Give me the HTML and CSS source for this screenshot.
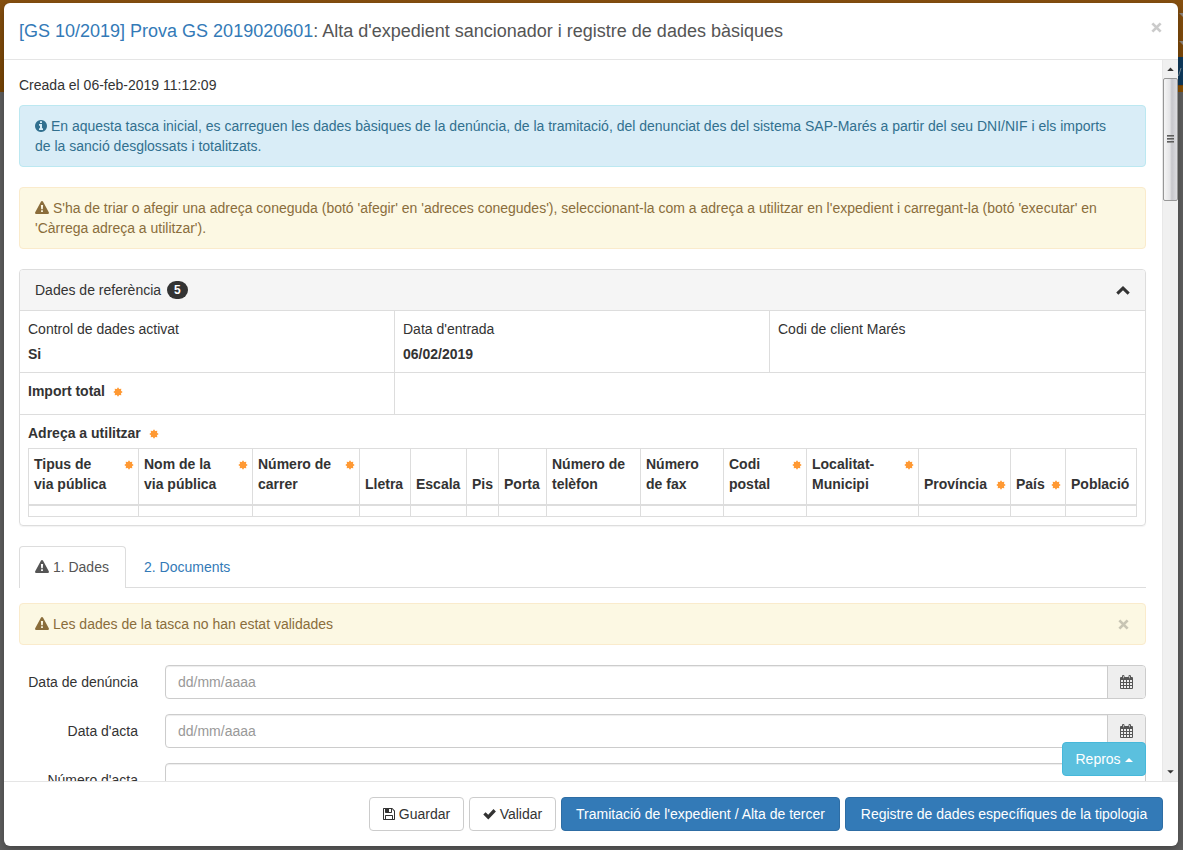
FILE: index.html
```html
<!DOCTYPE html>
<html lang="ca">
<head>
<meta charset="utf-8">
<title>Alta d'expedient sancionador</title>
<link rel="stylesheet" href="styles.css">
</head>
<body>
<svg class="sprite" aria-hidden="true">
  <symbol id="i-info" viewBox="128 128 1536 1536"><path d="M1152 1376v-160q0-14-9-23t-23-9h-96v-512q0-14-9-23t-23-9h-320q-14 0-23 9t-9 23v160q0 14 9 23t23 9h96v320h-96q-14 0-23 9t-9 23v160q0 14 9 23t23 9h448q14 0 23-9t9-23zm-128-896v-160q0-14-9-23t-23-9h-192q-14 0-23 9t-9 23v160q0 14 9 23t23 9h192q14 0 23-9t9-23zm640 416q0 209-103 385.5t-279.5 279.5-385.5 103-385.5-103-279.5-279.5-103-385.5 103-385.5 279.5-279.5 385.5-103 385.5 103 279.5 279.5 103 385.5z"/></symbol>
  <symbol id="i-warn" viewBox="0 0 14 13"><path fill-rule="evenodd" d="M7 0Q7.700 0 8.100 .7L13.800 11.300Q14.300 12.800 12.900 13H1.100Q-.3 12.800 .2 11.300L5.900 .7Q6.300 0 7 0ZM5.900 4 6.200 8.300H7.800L8.100 4ZM6.100 9.300V11.100H7.900V9.300Z"/></symbol>
  <symbol id="i-save" viewBox="0 0 12 12"><path fill-rule="evenodd" d="M.7 0H9.200L12 2.800V11.300Q12 12 11.300 12H.7Q0 12 0 11.300V.7Q0 0 .7 0ZM1 1V11H2V7.700Q2 7 2.700 7H9.300Q10 7 10 7.700V11H11V3.200L9 1V4.300Q9 5 8.300 5H2.700Q2 5 2 4.300V1ZM3 8V11H9V8ZM6 1V4H8V1Z"/></symbol>
  <symbol id="i-check" viewBox="0 0 13 12"><path d="M0.300 6.600 2.600 4.300 5.200 6.800 10.500 1 12.900 3.400 5.300 11.400z"/></symbol>
  <symbol id="i-close" viewBox="0 0 12 12"><path fill="none" stroke="currentColor" stroke-width="3" d="M1.500 1.500 10.500 10.500M10.500 1.500 1.500 10.500"/></symbol>
  <symbol id="i-calendar" viewBox="0 0 13 14"><path fill-rule="evenodd" d="M0 3Q0 2 1 2H2V1Q2 0 3.200 0T4.500 1V2H8.500V1Q8.500 0 9.700 0T11 1V2H12Q13 2 13 3V13Q13 14 12 14H1Q0 14 0 13ZM1 5V7H3V5ZM4 5V7H6V5ZM7 5V7H9V5ZM10 5V7H12V5ZM1 8V10H3V8ZM4 8V10H6V8ZM7 8V10H9V8ZM10 8V10H12V8ZM1 11V13H3V11ZM4 11V13H6V11ZM7 11V13H9V11ZM10 11V13H12V11ZM3 1V3.300H3.600V1ZM9.400 1V3.300H10V1Z"/></symbol>
  <symbol id="i-chevron" viewBox="0 0 14 10"><path fill="none" stroke="currentColor" stroke-width="3" d="M1.300 8.600 7 3.100 12.700 8.600"/></symbol>
  <symbol id="i-star" viewBox="0 0 10 10"><path d="M5 .3 6.200 2 8.300 1.700 8 3.800 9.700 5 8 6.200 8.300 8.300 6.200 8 5 9.700 3.800 8 1.700 8.300 2 6.200 .3 5 2 3.800 1.700 1.700 3.800 2Z"/></symbol>
</svg>

<div class="backdrop" aria-hidden="true">
  <div class="backdrop-nav">
    <svg class="backdrop-edge" viewBox="0 0 5 92">
      <path fill="#8f8780" d="M1 13H5V17ZM1 41H5V45Z"/>
      <path fill="#0e3a5d" d="M0 57H5V85H0Z"/>
      <path fill="none" stroke="#7f8f9c" d="M.5 76 3 68"/>
      <path fill="#8a5000" d="M0 86H5V92H0Z"/>
    </svg>
  </div>
</div>

<div class="modal" role="dialog" aria-labelledby="title">
  <header class="modal-header">
    <h1 class="modal-title" id="title"><a href="#">[GS 10/2019] Prova GS 2019020601</a>: Alta d'expedient sancionador i registre de dades bàsiques</h1>
    <button type="button" class="close" aria-label="Tanca"><svg class="icon-close"><use href="#i-close"/></svg></button>
  </header>

  <div class="modal-main">
    <div class="modal-body">
      <p class="created">Creada el 06-feb-2019 11:12:09</p>

      <div class="alert alert-info"><svg class="icon"><use href="#i-info"/></svg> En aquesta tasca inicial, es carreguen les dades bàsiques de la denúncia, de la tramitació, del denunciat des del sistema SAP-Marés a partir del seu DNI/NIF i els imports<br>de la sanció desglossats i totalitzats.</div>

      <div class="alert alert-warning"><svg class="icon icon-warn"><use href="#i-warn"/></svg> S'ha de triar o afegir una adreça coneguda (botó 'afegir' en 'adreces conegudes'), seleccionant-la com a adreça a utilitzar en l'expedient i carregant-la (botó 'executar' en 'Càrrega adreça a utilitzar').</div>

      <section class="panel">
        <div class="panel-heading">
          <h2 class="panel-title">Dades de referència <span class="badge">5</span></h2>
          <button type="button" class="toggle" aria-label="Plega"><svg class="icon-chevron"><use href="#i-chevron"/></svg></button>
        </div>
        <div class="facts">
          <div class="fact"><span>Control de dades activat</span><strong>Si</strong></div>
          <div class="fact"><span>Data d'entrada</span><strong>06/02/2019</strong></div>
          <div class="fact"><span>Codi de client Marés</span></div>
          <div class="fact fact-short"><strong class="required">Import total <svg class="star"><use href="#i-star"/></svg></strong></div>
          <div class="fact fact-rest"></div>
          <div class="fact fact-full">
            <strong class="required" id="address">Adreça a utilitzar <svg class="star"><use href="#i-star"/></svg></strong>
            <table class="address" aria-labelledby="address">
              <colgroup><col class="c-type"><col class="c-name"><col class="c-number"><col class="c-letter"><col class="c-stair"><col class="c-floor"><col class="c-door"><col class="c-phone"><col class="c-fax"><col class="c-fax"><col class="c-town"><col class="c-province"><col class="c-country"><col class="c-place"></colgroup>
              <thead>
                <tr>
                  <th><div class="th">Tipus de<br>via pública<svg class="star"><use href="#i-star"/></svg></div></th>
                  <th><div class="th">Nom de la<br>via pública<svg class="star"><use href="#i-star"/></svg></div></th>
                  <th><div class="th">Número de<br>carrer<svg class="star"><use href="#i-star"/></svg></div></th>
                  <th><div class="th">Lletra</div></th>
                  <th><div class="th">Escala</div></th>
                  <th><div class="th">Pis</div></th>
                  <th><div class="th">Porta</div></th>
                  <th><div class="th">Número de<br>telèfon</div></th>
                  <th><div class="th">Número<br>de fax</div></th>
                  <th><div class="th">Codi<br>postal<svg class="star"><use href="#i-star"/></svg></div></th>
                  <th><div class="th">Localitat-<br>Municipi<svg class="star"><use href="#i-star"/></svg></div></th>
                  <th><div class="th">Província<svg class="star"><use href="#i-star"/></svg></div></th>
                  <th><div class="th">País<svg class="star"><use href="#i-star"/></svg></div></th>
                  <th><div class="th">Població</div></th>
                </tr>
              </thead>
              <tbody><tr><td></td><td></td><td></td><td></td><td></td><td></td><td></td><td></td><td></td><td></td><td></td><td></td><td></td><td></td></tr></tbody>
            </table>
          </div>
        </div>
      </section>

      <nav class="tabs">
        <a class="tab tab-active" href="#"><svg class="icon icon-warn"><use href="#i-warn"/></svg> 1. Dades</a>
        <a class="tab" href="#">2. Documents</a>
      </nav>

      <div class="alert alert-warning alert-dismiss"><span><svg class="icon icon-warn"><use href="#i-warn"/></svg> Les dades de la tasca no han estat validades</span><button type="button" class="close" aria-label="Tanca"><svg class="icon-close"><use href="#i-close"/></svg></button></div>

      <form class="form">
        <div class="field">
          <label for="denuncia">Data de denúncia</label>
          <div class="input-group"><input id="denuncia" type="text" placeholder="dd/mm/aaaa"><button type="button" class="addon" aria-label="Calendari"><svg class="icon-calendar"><use href="#i-calendar"/></svg></button></div>
        </div>
        <div class="field">
          <label for="acta">Data d'acta</label>
          <div class="input-group"><input id="acta" type="text" placeholder="dd/mm/aaaa"><button type="button" class="addon" aria-label="Calendari"><svg class="icon-calendar"><use href="#i-calendar"/></svg></button></div>
        </div>
        <div class="field">
          <label for="numero">Número d'acta</label>
          <div class="input-group"><input id="numero" type="text"></div>
        </div>
      </form>
    </div>

    <div class="scrollbar" aria-hidden="true">
      <svg class="arrow" viewBox="0 0 16 18"><path d="M4.500 11 8 7.500 11.500 11z"/></svg>
      <div class="thumb"><i></i><i></i><i></i></div>
      <svg class="arrow arrow-down" viewBox="0 0 16 18"><path d="M4.500 7 8 10.500 11.500 7z"/></svg>
    </div>
    <button type="button" class="btn btn-info repros">Repros <span class="caret"></span></button>
  </div>

  <footer class="modal-footer">
    <button type="button" class="btn btn-save"><svg class="icon"><use href="#i-save"/></svg> Guardar</button>
    <button type="button" class="btn btn-check"><svg class="icon icon-check"><use href="#i-check"/></svg> Validar</button>
    <button type="button" class="btn btn-primary btn-next">Tramitació de l'expedient / Alta de tercer</button>
    <button type="button" class="btn btn-primary btn-register">Registre de dades específiques de la tipologia</button>
  </footer>
</div>
</body>
</html>
```

FILE: styles.css
```css
* { box-sizing: border-box; }

body {
  margin: 0;
  height: 100vh;
  display: flex;
  padding: 3px 5px 4px 4px;
  background: #5a5a5a;
  color: #333;
  font: 14px/20px "Liberation Sans", Arial, sans-serif;
  overflow: hidden;
}

a { color: #337ab7; text-decoration: none; }
button, input { font: inherit; color: inherit; }
svg { fill: currentColor; }
.sprite { position: absolute; width: 0; height: 0; }

/* Dimmed page behind the dialog */
.backdrop { position: absolute; inset: 0; z-index: -1; background: #5f5f5f; }
.backdrop-nav { height: 92px; background: linear-gradient(#87500f, #774404); }
.backdrop-edge { display: block; width: 5px; height: 92px; margin-left: auto; }

.modal {
  flex: 1;
  min-width: 0;
  display: flex;
  flex-direction: column;
  background: #fff;
  border-radius: 6px;
  box-shadow: 0 3px 9px rgba(0, 0, 0, .3);
}

.modal-header {
  display: flex;
  justify-content: space-between;
  align-items: flex-start;
  padding: 15px;
  border-bottom: 1px solid #e5e5e5;
}
.modal-title { margin: 0; font-size: 18px; line-height: 26px; font-weight: 400; color: #555; }

.close { padding: 4px 1px; border: 0; background: none; color: #000; opacity: .2; }
.icon-close { display: block; width: 11px; height: 11px; }

.modal-main { position: relative; flex: 1; min-height: 0; display: flex; }
.modal-body { flex: 1; min-width: 0; padding: 15px 16px 15px 15px; overflow: hidden; }

.created { margin: 0 0 10px; }

.alert { margin-bottom: 20px; padding: 10px 15px; border: 1px solid; border-radius: 4px; }
.alert-info { color: #31708f; background: #d9edf7; border-color: #bce8f1; }
.alert-warning { color: #8a6d3b; background: #fcf8e3; border-color: #faebcc; }
.alert-dismiss { display: flex; justify-content: space-between; align-items: center; }

.icon { width: 12px; height: 12px; vertical-align: -1px; }
.icon-warn { width: 14px; height: 13px; }
.icon-check { width: 13px; }
.icon-chevron { display: block; width: 14px; height: 10px; }
.icon-calendar { display: block; width: 13px; height: 14px; }
.star { width: 10px; height: 10px; color: #f93; vertical-align: -1px; }

.panel { margin-bottom: 20px; border: 1px solid #ddd; border-radius: 4px; box-shadow: 0 1px 1px rgba(0, 0, 0, .05); }
.panel-heading {
  display: flex;
  justify-content: space-between;
  align-items: center;
  padding: 10px 15px;
  background: #f5f5f5;
  border-bottom: 1px solid #ddd;
  border-radius: 3px 3px 0 0;
}
.panel-title { display: flex; align-items: center; gap: 6px; margin: 0; font-size: 14px; line-height: 20px; font-weight: 400; }
.badge { padding: 3px 7px; border-radius: 10px; background: #333; color: #fff; font-size: 12px; line-height: 12px; font-weight: 700; }
.toggle { padding: 0; border: 0; background: none; }

.facts { display: grid; grid-template-columns: repeat(3, 1fr); }
.fact {
  display: flex;
  flex-direction: column;
  gap: 5px;
  min-width: 0;
  padding: 8px;
  border-right: 1px solid #ddd;
  border-bottom: 1px solid #ddd;
}
.fact:nth-child(3), .fact-rest, .fact-full { border-right: 0; }
.fact-short { padding-bottom: 13px; }
.fact-rest { grid-column: span 2; }
.fact-full { grid-column: 1 / -1; border-bottom: 0; }
.required .star { margin-left: 4px; }

.address { width: 100%; table-layout: fixed; border-collapse: collapse; }
.address th, .address td { padding: 5px; border: 1px solid #ddd; text-align: left; vertical-align: bottom; }
.address th { padding-right: 4px; border-bottom-width: 2px; white-space: nowrap; }
.address td { height: 11px; }
.th { position: relative; margin-bottom: 5px; }
.th .star { position: absolute; top: 6px; right: 0; }
.c-type { width: 110px; }
.c-name { width: 114px; }
.c-number { width: 107px; }
.c-letter { width: 51px; }
.c-stair { width: 56px; }
.c-floor { width: 32px; }
.c-door { width: 48px; }
.c-phone { width: 94px; }
.c-fax { width: 83px; }
.c-town { width: 112px; }
.c-province { width: 92px; }
.c-country { width: 55px; }
.c-place { width: 71px; }

.tabs { display: flex; gap: 2px; margin-bottom: 15px; border-bottom: 1px solid #ddd; }
.tab { padding: 10px 15px; border: 1px solid transparent; border-bottom: 0; border-radius: 4px 4px 0 0; }
.tab-active { min-width: 107px; margin-bottom: -1px; padding-bottom: 11px; border-color: #ddd; background: #fff; color: #555; }

.form { display: flex; flex-direction: column; gap: 15px; }
.field { display: grid; grid-template-columns: 119px 1fr; gap: 27px; }
.field label { padding: 7px 0; text-align: right; }
.input-group { display: flex; min-width: 0; border: 1px solid #ccc; border-radius: 4px; overflow: hidden; box-shadow: inset 0 1px 1px rgba(0, 0, 0, .075); }
.input-group input { flex: 1; min-width: 0; height: 32px; padding: 6px 12px; border: 0; background: none; outline: 0; }
.input-group input::placeholder { color: #999; opacity: 1; }
.addon { padding: 6px 12px; border: 0; border-left: 1px solid #ccc; background: #eee; color: #555; }

/* Drawn scroll bar */
.scrollbar { width: 16px; display: flex; flex-direction: column; background: #f0f0f0; border-left: 1px solid #e8e8e8; }
.arrow { width: 15px; height: 18px; }
.arrow-down { margin-top: auto; }
.thumb {
  height: 17%;
  display: flex;
  flex-direction: column;
  align-items: center;
  justify-content: center;
  gap: 1px;
  border: 1px solid #979797;
  border-radius: 2px;
  background: linear-gradient(to right, #f5f5f5, #e4e4e6 45%, #c6c6cb 60%, #dcdce0);
}
.thumb i { width: 7px; height: 2px; background: linear-gradient(#444, #aaa); }

.btn { padding: 6px 12px; border: 1px solid #ccc; border-radius: 4px; background: #fff; white-space: nowrap; }
.btn-primary { background: #337ab7; border-color: #2e6da4; color: #fff; }
.btn-info { background: #5bc0de; border-color: #46b8da; color: #fff; }
.btn-save { min-width: 95px; }
.btn-check { min-width: 87px; }
.btn-next { min-width: 279px; }
.btn-register { min-width: 318px; }
.repros { position: absolute; right: 32px; bottom: 5px; min-width: 84px; }
.caret { display: inline-block; vertical-align: middle; border: 4px solid transparent; border-top: 0; border-bottom-color: #fff; }

.modal-footer { display: flex; justify-content: flex-end; gap: 5px; padding: 15px; border-top: 1px solid #e5e5e5; }
```
